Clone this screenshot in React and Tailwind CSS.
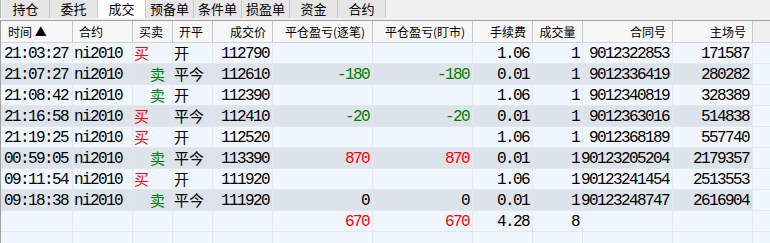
import React from 'react';

const tabs = ['持仓', '委托', '成交', '预备单', '条件单', '损盈单', '资金', '合约'];

const cols = [
  { title: '时间 ▲', w: 'w-[72px]', head: 'justify-start pl-[7px]', cell: 'justify-start pl-[3px]' },
  { title: '合约', w: 'w-[60px]', head: 'justify-start pl-[6px]', cell: 'justify-start pl-[1px]' },
  { title: '买卖', w: 'w-[40px]', head: 'justify-start pl-[6px]', cell: 'justify-start pl-[1px]' },
  { title: '开平', w: 'w-[40px]', head: 'justify-start pl-[6px]', cell: 'justify-start pl-[1px]' },
  { title: '成交价', w: 'w-[60px]', head: 'justify-end pr-[6px]', cell: 'justify-end pr-[3px]' },
  { title: '平仓盈亏(逐笔)', w: 'w-[100px]', head: 'justify-end pr-[7px]', cell: 'justify-end pr-[3px]' },
  { title: '平仓盈亏(盯市)', w: 'w-[100px]', head: 'justify-end pr-[7px]', cell: 'justify-end pr-[3px]' },
  { title: '手续费', w: 'w-[60px]', head: 'justify-end pr-[6px]', cell: 'justify-end pr-[3px]' },
  { title: '成交量', w: 'w-[50px]', head: 'justify-center', cell: 'justify-end pr-[3px]' },
  { title: '合同号', w: 'w-[90px]', head: 'justify-end pr-[6px]', cell: 'justify-end pr-[3px]' },
  { title: '主场号', w: 'w-[80px]', head: 'justify-end pr-[6px]', cell: 'justify-end pr-[3px]' },
];

const trades = [
  ['21:03:27', 'ni2010', '买', '开', '112790', '', '', '1.06', '1', '9012322853', '171587'],
  ['21:07:27', 'ni2010', '卖', '平今', '112610', '-180', '-180', '0.01', '1', '9012336419', '280282'],
  ['21:08:42', 'ni2010', '卖', '开', '112390', '', '', '1.06', '1', '9012340819', '328389'],
  ['21:16:58', 'ni2010', '买', '平今', '112410', '-20', '-20', '0.01', '1', '9012363016', '514838'],
  ['21:19:25', 'ni2010', '买', '开', '112520', '', '', '1.06', '1', '9012368189', '557740'],
  ['00:59:05', 'ni2010', '卖', '平今', '113390', '870', '870', '0.01', '1', '90123205204', '2179357'],
  ['09:11:54', 'ni2010', '买', '开', '111920', '', '', '1.06', '1', '90123241454', '2513553'],
  ['09:18:38', 'ni2010', '卖', '平今', '111920', '0', '0', '0.01', '1', '90123248747', '2616904'],
];

const total = ['', '', '', '', '', '670', '670', '4.28', '8', '', ''];

const mono = "font-['Liberation_Mono',monospace] text-[16px] tracking-[-1.6px]";
const cjk = "font-['Noto_Sans_CJK_SC',sans-serif] text-[15px]";

function pnlColor(v) {
  if (v.startsWith('-')) return 'text-[#008000]';
  if (v !== '' && v !== '0') return 'text-[#ff0000]';
  return 'text-black';
}

function Cell({ col, i, value }) {
  let content = null;
  if (i === 2 && value) {
    content = value === '买'
      ? <span className={`${cjk} text-[#ff0000]`}>买</span>
      : <span className={`${cjk} text-[#008000] pl-[16px]`}>卖</span>;
  } else if (i === 3 && value) {
    content = <span className={`${cjk} text-black`}>{value}</span>;
  } else if (value) {
    const color = i === 5 || i === 6 ? pnlColor(value) : 'text-black';
    content = <span className={`${mono} ${color}`}>{value}</span>;
  }
  return (
    <div className={`${col.w} ${col.cell} shrink-0 flex items-center pt-[1px] border-r border-[#e4e8ee] whitespace-nowrap`}>
      {content}
    </div>
  );
}

function Row({ values, dark }) {
  return (
    <div className="flex h-[21px] border-b border-[#e4e8ee] bg-[#f0f6fd]">
      <div className={`flex ${dark ? 'bg-[#dde3eb]' : 'bg-[#f0f6fd]'}`}>
        {cols.map((c, i) => (
          <Cell key={i} col={c} i={i} value={values[i]} />
        ))}
      </div>
      <div className="flex-1" />
    </div>
  );
}

export default function App() {
  return (
    <div className="w-[770px] h-[243px] overflow-hidden bg-[#f0f0f0] font-['Noto_Sans_CJK_SC',sans-serif] text-[12px] text-black">
      {/* tab strip */}
      <div className="flex h-[18px] pl-[1px] border-l border-[#b8b8b8]">
        {tabs.map((t, i) => (
          <div
            key={t}
            className={`w-[48px] h-full flex items-center justify-center text-[13px] border-r border-[#c8c8c8] ${
              i === 2 ? 'bg-white' : 'bg-[#e6e6e6]'
            }`}
          >
            {t}
          </div>
        ))}
      </div>

      {/* table */}
      <div className="mt-[2px] border-l border-t border-[#a0a0a0]">
        <div className="flex h-[22px] border-b border-[#d4d4d4]">
          {cols.map((c, i) => (
            <div
              key={i}
              className={`${c.w} ${c.head} shrink-0 flex items-center border-r border-[#c8c8c8] bg-[#f7f7f7] whitespace-nowrap`}
            >
              {c.title}
            </div>
          ))}
          <div className="flex-1 bg-[#f0f0f0]" />
        </div>
        {trades.map((r, i) => (
          <Row key={i} values={r} dark={i % 2 === 1} />
        ))}
        <Row values={total} dark={false} />
        <Row values={['', '', '', '', '', '', '', '', '', '', '']} dark={false} />
      </div>
    </div>
  );
}
